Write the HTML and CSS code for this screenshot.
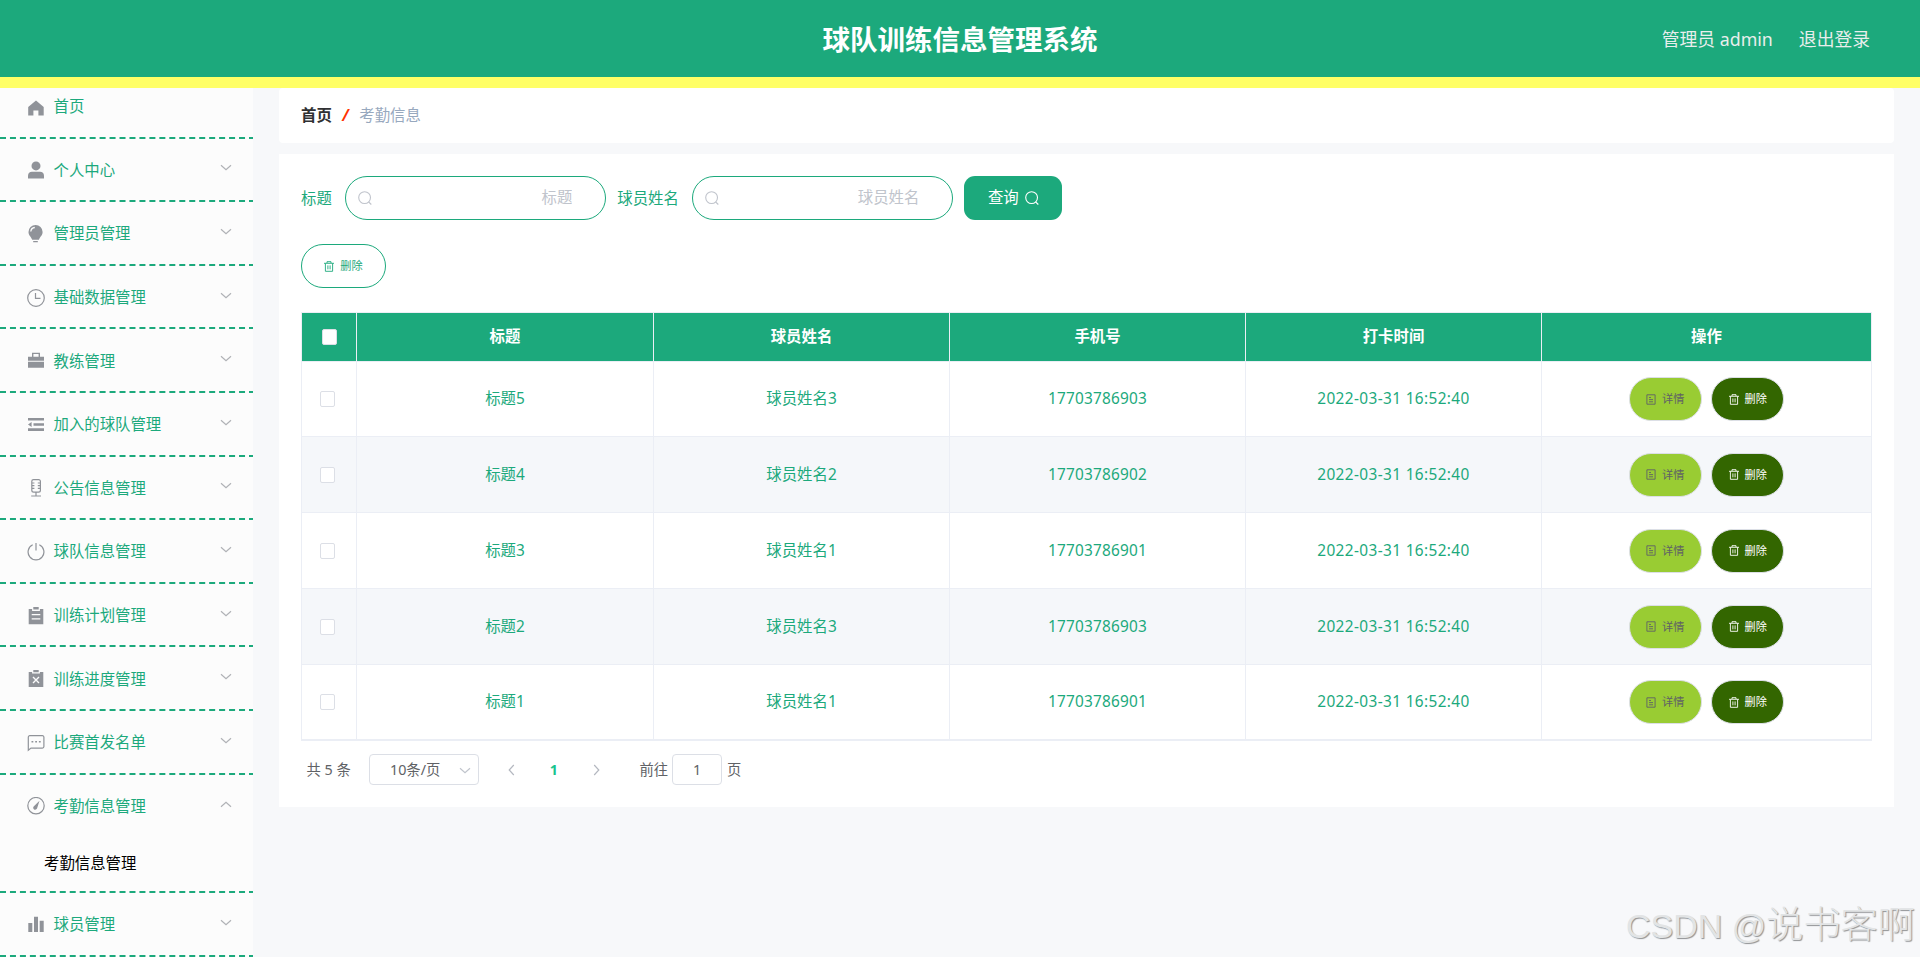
FILE: index.html
```html
<!DOCTYPE html>
<html lang="zh-CN">
<head>
<meta charset="utf-8">
<title>球队训练信息管理系统</title>
<link rel="stylesheet" href="styles.css">
</head>
<body>
<svg class="sprite" aria-hidden="true">
  <symbol id="i-down" viewBox="0 0 12 8"><path d="M1 1.2l5 4.6 5-4.6" fill="none" stroke="currentColor" stroke-width="1.2"/></symbol>
  <symbol id="i-search" viewBox="0 0 14 14"><circle cx="6.6" cy="6.6" r="5.9" fill="none" stroke="currentColor" stroke-width="1.1"/><path d="M10.6 10.8l2.7 2.7" stroke="currentColor" stroke-width="1.2"/></symbol>
  <symbol id="i-trash" viewBox="0 0 10 11"><path d="M0 2.3h10M3 2V.7h4V2M1.4 2.4v7.9h7.2V2.4M3.9 4.4v3.9M6.1 4.4v3.9" fill="none" stroke="currentColor" stroke-width=".9"/></symbol>
  <symbol id="i-doc" viewBox="0 0 10 11"><path d="M.9.8h8.2v9.4H.9zM3 3.5h2M3 5.6h4M3 7.8h4" fill="none" stroke="currentColor" stroke-width=".9"/></symbol>
</svg>

<header class="header">
  <h1 class="title">球队训练信息管理系统</h1>
  <div class="user"><span>管理员 admin</span><span>退出登录</span></div>
</header>

<div class="layout">
  <nav class="sidebar">
    <ul class="menu">
      <li class="item"><div class="row"><svg class="ico" viewBox="0 0 18 18"><path fill="currentColor" d="M9 2.6L1.2 9v8.6h5.2v-5.2h5v5.2h5.3V9z"/></svg><span>首页</span></div></li>
      <li class="item"><div class="row"><svg class="ico" viewBox="0 0 18 18"><circle cx="9" cy="4.9" r="4.5" fill="currentColor"/><path fill="currentColor" d="M1 17.4v-2.6c0-2.4 1.6-4 4-4h8c2.400 0 4 1.600 4 4v2.600z"/></svg><span>个人中心</span><svg class="arrow"><use href="#i-down"/></svg></div></li>
      <li class="item"><div class="row"><svg class="ico" viewBox="0 0 18 18"><path fill="currentColor" d="M8.500 0a7 7 0 0 0-7 7c0 3.600 2.600 4.600 3.700 7.800h6.700c1.100-3.200 3.700-4.200 3.700-7.800a7 7 0 0 0-7.100-7zM6.200 16h4.600v1.200H6.200z"/><path d="M3.800 6.500a4.500 4.500 0 0 1 4-4" fill="none" stroke="#fcfcfc" stroke-width="1.300"/></svg><span>管理员管理</span><svg class="arrow"><use href="#i-down"/></svg></div></li>
      <li class="item"><div class="row"><svg class="ico" viewBox="0 0 18 18"><g fill="none" stroke="currentColor" stroke-width="1.200"><circle cx="9" cy="9" r="8.300"/><path d="M8.500 4v5.400H13.500"/></g></svg><span>基础数据管理</span><svg class="arrow"><use href="#i-down"/></svg></div></li>
      <li class="item"><div class="row"><svg class="ico" viewBox="0 0 18 18"><path fill="currentColor" d="M1 4.700h4V.7h8v4h4v4H1zM6.400 2.100v2.600h5.200V2.100zM1 9.700h16v6H1z"/></svg><span>教练管理</span><svg class="arrow"><use href="#i-down"/></svg></div></li>
      <li class="item"><div class="row"><svg class="ico" viewBox="0 0 18 18"><path fill="currentColor" d="M1 2h16v2.600H1zM6.500 7.200H17v2.600H6.500zM1 12.300h16v2.600H1zM1 8.500l3.600-2.400v4.800z"/></svg><span>加入的球队管理</span><svg class="arrow"><use href="#i-down"/></svg></div></li>
      <li class="item"><div class="row"><svg class="ico" viewBox="0 0 18 18"><path fill="none" stroke="currentColor" stroke-width="1.200" d="M6.500.6h5.200a1.700 1.700 0 0 1 1.700 1.700v8.900a1.900 1.900 0 0 1-1.900 1.900H6.700a1.900 1.900 0 0 1-1.900-1.900V2.300A1.700 1.700 0 0 1 6.500.6zM9 13v4M4.200 17h9.800M4.800 4h2.600M4.800 6.700h2.600M4.800 9.400h2.600M13.400 4h-2.600M13.400 6.700h-2.600M13.400 9.400h-2.600"/></svg><span>公告信息管理</span><svg class="arrow"><use href="#i-down"/></svg></div></li>
      <li class="item"><div class="row"><svg class="ico" viewBox="0 0 18 18"><path fill="none" stroke="currentColor" stroke-width="1.200" d="M5.700 1.800a7.900 7.900 0 1 0 6.600 0M9 0v7.400"/></svg><span>球队信息管理</span><svg class="arrow"><use href="#i-down"/></svg></div></li>
      <li class="item"><div class="row"><svg class="ico" viewBox="0 0 18 18"><path fill="currentColor" d="M1.700 2h3.400v1.900h7.800V2h3.400v15.300H1.700zM6.300 0h5.400v2.600H6.300z"/><path d="M4.700 7.700h8.600M4.700 11.900h8.600" stroke="#fcfcfc" stroke-width="1.200"/></svg><span>训练计划管理</span><svg class="arrow"><use href="#i-down"/></svg></div></li>
      <li class="item"><div class="row"><svg class="ico" viewBox="0 0 18 18"><path fill="currentColor" d="M1.700 2h3.400v1.500h7.800V2h3.400v15H1.700zM6.300 0h5.400v2.200H6.300z"/><path d="M6 7l6 6M12 7l-6 6" stroke="#fcfcfc" stroke-width="1.400"/></svg><span>训练进度管理</span><svg class="arrow"><use href="#i-down"/></svg></div></li>
      <li class="item"><div class="row"><svg class="ico" viewBox="0 0 18 18"><path fill="none" stroke="currentColor" stroke-width="1.200" d="M1.300 16.300V3.200a1.500 1.500 0 0 1 1.500-1.500h12.600a1.500 1.500 0 0 1 1.500 1.500v9.400a1.500 1.500 0 0 1-1.500 1.500H4z"/><path fill="currentColor" d="M4.500 6.900h1.800v1.600H4.500zM8.200 6.900h1.800v1.600H8.200zM11.900 6.900h1.800v1.600h-1.800z"/></svg><span>比赛首发名单</span><svg class="arrow"><use href="#i-down"/></svg></div></li>
      <li class="item"><div class="row"><svg class="ico" viewBox="0 0 18 18"><circle cx="9" cy="8.700" r="8.200" fill="none" stroke="currentColor" stroke-width="1.200"/><path fill="currentColor" d="M12.500 3.800l-5.600 5.400a2 2 0 1 0 3.200 2.100z"/></svg><span>考勤信息管理</span><svg class="arrow up"><use href="#i-down"/></svg></div>
        <div class="sub">考勤信息管理</div></li>
      <li class="item"><div class="row"><svg class="ico" viewBox="0 0 18 18"><path fill="currentColor" d="M1.300 7h4v9h-4zM7 .8h4V16H7zM12.700 4.700h4V16h-4z"/></svg><span>球员管理</span><svg class="arrow"><use href="#i-down"/></svg></div></li>
    </ul>
  </nav>

  <main class="main">
    <div class="crumbs"><b>首页</b><i>/</i><span>考勤信息</span></div>
    <section class="panel">
      <form class="filters">
        <label>标题</label>
        <div class="field"><svg class="mag"><use href="#i-search"/></svg><input type="text" placeholder="标题"></div>
        <label>球员姓名</label>
        <div class="field"><svg class="mag"><use href="#i-search"/></svg><input type="text" placeholder="球员姓名"></div>
        <button type="button" class="query">查询<svg class="mag"><use href="#i-search"/></svg></button>
      </form>
      <button type="button" class="pill remove"><svg><use href="#i-trash"/></svg>删除</button>

      <table class="grid">
        <colgroup><col class="c-check"><col class="c-first"><col class="c-data"><col class="c-data"><col class="c-data"><col></colgroup>
        <thead><tr><th><span class="box"></span></th><th>标题</th><th>球员姓名</th><th>手机号</th><th>打卡时间</th><th>操作</th></tr></thead>
        <tbody>
          <tr><td><span class="box"></span></td><td>标题5</td><td>球员姓名3</td><td>17703786903</td><td>2022-03-31 16:52:40</td><td><div class="ops"><button class="pill detail"><svg><use href="#i-doc"/></svg>详情</button><button class="pill del"><svg><use href="#i-trash"/></svg>删除</button></div></td></tr>
          <tr><td><span class="box"></span></td><td>标题4</td><td>球员姓名2</td><td>17703786902</td><td>2022-03-31 16:52:40</td><td><div class="ops"><button class="pill detail"><svg><use href="#i-doc"/></svg>详情</button><button class="pill del"><svg><use href="#i-trash"/></svg>删除</button></div></td></tr>
          <tr><td><span class="box"></span></td><td>标题3</td><td>球员姓名1</td><td>17703786901</td><td>2022-03-31 16:52:40</td><td><div class="ops"><button class="pill detail"><svg><use href="#i-doc"/></svg>详情</button><button class="pill del"><svg><use href="#i-trash"/></svg>删除</button></div></td></tr>
          <tr><td><span class="box"></span></td><td>标题2</td><td>球员姓名3</td><td>17703786903</td><td>2022-03-31 16:52:40</td><td><div class="ops"><button class="pill detail"><svg><use href="#i-doc"/></svg>详情</button><button class="pill del"><svg><use href="#i-trash"/></svg>删除</button></div></td></tr>
          <tr><td><span class="box"></span></td><td>标题1</td><td>球员姓名1</td><td>17703786901</td><td>2022-03-31 16:52:40</td><td><div class="ops"><button class="pill detail"><svg><use href="#i-doc"/></svg>详情</button><button class="pill del"><svg><use href="#i-trash"/></svg>删除</button></div></td></tr>
        </tbody>
      </table>

      <div class="pager">
        <span class="total">共 5 条</span>
        <div class="size"><span>10条/页</span><svg><use href="#i-down"/></svg></div>
        <svg class="step prev"><use href="#i-down"/></svg>
        <b class="page">1</b>
        <svg class="step next"><use href="#i-down"/></svg>
        <span class="goto">前往</span>
        <div class="jump">1</div>
        <span>页</span>
      </div>
    </section>
  </main>
</div>
<div class="watermark"><span>CSDN @</span>说书客啊</div>
</body>
</html>
```

FILE: styles.css
```css
* { box-sizing: border-box; }

body {
  margin: 0;
  height: 957px;
  overflow: hidden;
  background: #f7f8fa;
  color: #1ca97c;
  font: 15.4px/22px "Noto Sans", "Noto Sans CJK SC", sans-serif;
}

button, input { font: inherit; margin: 0; }
.sprite { position: absolute; width: 0; height: 0; }

.header {
  display: grid;
  grid-template-columns: 1fr auto 1fr;
  align-items: center;
  height: 88px;
  padding-right: 50px;
  padding-left: 50px;
  background: #1ca97c;
  border-bottom: 11px solid #ffff66;
}
.title {
  grid-column: 2;
  margin: 2px 0 0;
  color: #fff;
  font-size: 27.5px;
  line-height: 40px;
}
.user {
  display: flex;
  justify-content: flex-end;
  gap: 26px;
  color: #e9eeec;
  font-size: 17.8px;
}

.layout { display: flex; height: 869px; }

.sidebar {
  flex: none;
  width: 253px;
  overflow: hidden;
  background: #fcfcfc;
}
.menu {
  width: 255px;
  margin: -13px 0 0;
  padding: 0;
  list-style: none;
}
.item { border-bottom: 2px dashed #1ca97c; }
.row {
  display: flex;
  align-items: center;
  height: 61.6px;
  padding: 3px 23px 0 26.5px;
}
.ico {
  width: 18px;
  height: 18px;
  margin: -1px 9px 0 0;
  color: #909399;
}
.arrow {
  width: 12px;
  height: 8px;
  margin: -5px 0 0 auto;
  color: #b0b2b6;
}
.arrow.up { transform: rotate(180deg); }
.sub {
  height: 55px;
  padding-left: 44px;
  color: #000;
  line-height: 55px;
}

.main { flex: 1; padding: 0 26px; }

.crumbs {
  display: flex;
  height: 55px;
  padding: 0 22px;
  background: #fff;
  border-radius: 4px;
  line-height: 55px;
}
.crumbs b { color: #303133; }
.crumbs i {
  margin: 0 10.5px;
  color: #ff3300;
  font-weight: bold;
}
.crumbs span { color: #97a8be; }

.panel {
  height: 653px;
  margin-top: 11px;
  padding: 22px;
  background: #fff;
}
.filters { display: flex; align-items: center; height: 44px; }
.filters label { padding-top: 1px; }
.filters label + .field { margin: 0 11px 0 13.5px; }
.field {
  display: flex;
  align-items: center;
  width: 261px;
  height: 44px;
  padding: 0 33px 0 12px;
  border: 1px solid #1ca97c;
  border-radius: 22px;
  color: #c0c4cc;
}
.field input {
  flex: 1;
  min-width: 0;
  padding: 0;
  border: 0;
  outline: 0;
  background: none;
  text-align: right;
}
.field input::placeholder { color: #c0c4cc; opacity: 1; }
.mag { flex: none; width: 14px; height: 14px; }
.query {
  display: flex;
  align-items: center;
  justify-content: center;
  gap: 6px;
  width: 98px;
  height: 44px;
  border: 0;
  border-radius: 11px;
  background: #1ca97c;
  color: #fff;
}

.pill {
  display: flex;
  align-items: center;
  justify-content: center;
  gap: 6px;
  width: 73px;
  height: 44px;
  padding: 0;
  border: 1px solid #dcdfe6;
  border-radius: 22px;
  font-size: 11.2px;
}
.pill svg { width: 10px; height: 11px; }
.remove {
  width: 85px;
  margin-top: 24px;
  border-color: #1ca97c;
  background: #fff;
  color: #1ca97c;
}
.detail { background: #99cc33; color: #606266; }
.del { background: #336600; color: #fff; }

.grid {
  width: 1571px;
  margin-top: 24px;
  border-spacing: 0;
  border: 1px solid #ebeef5;
  border-bottom-width: 2px;
  table-layout: fixed;
  text-align: center;
}
.c-check { width: 55px; }
.c-first { width: 297px; }
.c-data { width: 296px; }
.grid th {
  height: 49px;
  padding: 0;
  border-right: 1px solid #ebeef5;
  border-bottom: 1px solid #ebeef5;
  background: #1ca97c;
  color: #fff;
}
.grid td {
  height: 76px;
  padding: 0;
  border-right: 1px solid #ebeef5;
  border-bottom: 1px solid #ebeef5;
}
.grid th:last-child, .grid td:last-child { border-right: 0; }
.grid tbody tr:first-child td { height: 75px; }
.grid tbody tr:last-child td { height: 74px; border-bottom: 0; }
.grid tbody tr:nth-child(even) { background: #f5f7fa; }
.grid td:nth-child(4) { letter-spacing: .2px; }
.grid td:nth-child(5) { letter-spacing: .37px; }
.box {
  display: block;
  width: 15px;
  height: 16px;
  margin: 0 0 0 18px;
  border: 1px solid #dcdfe6;
  border-radius: 2px;
  background: #fff;
}
th .box { margin-left: 20px; }
.ops { display: flex; justify-content: center; gap: 9.500px; }

.pager {
  display: flex;
  align-items: center;
  height: 31px;
  margin-top: 13px;
  padding-left: 5.500px;
  color: #606266;
  font-size: 14.3px;
}
.total { width: 62.500px; }
.size, .jump {
  display: flex;
  align-items: center;
  height: 31px;
  border: 1px solid #dcdfe6;
  border-radius: 4px;
}
.size { width: 110px; padding: 0 7px 0 20px; }
.size svg {
  width: 12px;
  height: 8px;
  margin: 3px 0 0 auto;
  color: #c0c4cc;
}
.step { width: 12px; height: 8px; color: #b4b8c0; }
.prev { margin-left: 26px; transform: rotate(90deg); }
.next { transform: rotate(-90deg); }
.page { width: 73.500px; text-align: center; color: #18c48f; }
.goto { margin: 0 4px 0 37px; }
.jump { width: 50px; margin-right: 5px; justify-content: center; }

.watermark {
  position: absolute;
  right: 5px;
  bottom: 5px;
  color: #e2e4e5;
  font: 300 37.2px/52px "Noto Sans CJK SC", sans-serif;
  text-shadow: 1px 1px 1px #909294;
  white-space: nowrap;
}
.watermark span { font-family: "Liberation Sans", sans-serif; font-size: 34px; }
```
